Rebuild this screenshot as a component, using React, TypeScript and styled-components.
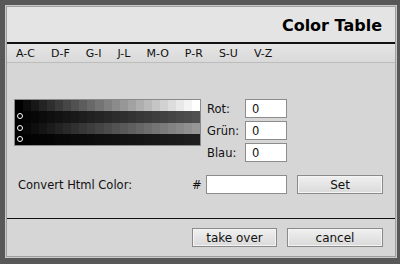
import React from 'react'
import styled, { createGlobalStyle } from 'styled-components'

const GlobalStyle = createGlobalStyle`
    html, body {
        margin : 0;
        padding : 0;
        background : #585858;
    }
    body {
        font-family : "DejaVu Sans", "Liberation Sans", sans-serif;
        color : #111;
    }
`

const Screen = styled.div`
    width : 400px;
    height : 264px;
    padding : 5px 3px 6px 5px;
    box-sizing : border-box;
    background : #585858;
`

const Window = styled.div`
    height : 100%;
    box-sizing : border-box;
    border : 1px solid #c9c9c9;
    box-shadow : inset 0 0 0 1px #9f9f9f;
    padding : 1px;
    display : flex;
    flex-direction : column;
    background : #d6d6d6;
`

const Header = styled.header`
    height : 37px;
    background : #e4e4e4;
    border-bottom : 2px solid #111;
    display : flex;
    align-items : center;
    justify-content : flex-end;
    padding : 2px 13px 0 0;
    box-sizing : border-box;
`

const Title = styled.h1`
    margin : 0;
    font-size : 16px;
    font-weight : bold;
    color : #000;
`

const TabBar = styled.nav`
    height : 18px;
    display : flex;
    align-items : center;
    padding-left : 1px;
    background : linear-gradient(#e6e6e6, #d9d9d9);
    border-bottom : 1px solid #bdbdbd;
`

const Tab = styled.span`
    font-size : 11px;
    padding : 0 8px;
    color : #111;
`

const Body = styled.section`
    flex : 1;
    padding : 36px 0 0 7px;
    border-bottom : 1px solid #111;
`

const TopRow = styled.div`
    display : flex;
    gap : 6px;
`

const Palette = styled.div`
    width : 187px;
    height : 47px;
    box-sizing : border-box;
    border : 1px solid #8a8a8a;
    display : flex;
    flex-direction : column;
`

const Strip = styled.div`
    flex : 1;
    display : flex;
    position : relative;
`

const Cell = styled.div`
    flex : 1;
`

const Thumb = styled.span`
    position : absolute;
    left : 2px;
    top : 50%;
    width : 4px;
    height : 4px;
    margin-top : -3.5px;
    border : 1.5px solid #fff;
    border-radius : 50%;
    background : #000;
`

const Fields = styled.div`
    display : flex;
    flex-direction : column;
    gap : 3px;
`

const FieldRow = styled.label`
    display : flex;
    align-items : center;
    font-size : 11.5px;
`

const FieldLabel = styled.span`
    width : 38px;
`

const Input = styled.div<{ $w: number }>`
    width : ${p => p.$w}px;
    height : 19px;
    box-sizing : border-box;
    background : #fff;
    border : 1px solid #8c8c8c;
    font-size : 11.5px;
    padding-left : 6px;
    display : flex;
    align-items : center;
`

const ConvertRow = styled.div`
    display : flex;
    align-items : center;
    gap : 0;
    margin-top : 13px;
    font-size : 11.5px;
`

const ConvertLabel = styled.span`
    box-sizing : border-box;
    padding-left : 4px;
    width : 178px;
`

const Hash = styled.span`
    width : 14px;
`

const Button = styled.div<{ $w: number }>`
    width : ${p => p.$w}px;
    height : 19px;
    box-sizing : border-box;
    border : 1px solid #8a8a8a;
    box-shadow : inset 0 0 0 1px #f4f4f4;
    background : linear-gradient(#f0f0f0, #dadada);
    display : flex;
    align-items : center;
    justify-content : center;
    font-size : 12px;
    color : #111;
`

const SetButton = styled(Button)`
    margin-left : 10px;
`

const Footer = styled.footer`
    height : 37px;
    display : flex;
    justify-content : flex-end;
    align-items : flex-start;
    gap : 10px;
    padding : 9px 12px 0 0;
    box-sizing : border-box;
`

const tabs = ['A-C', 'D-F', 'G-I', 'J-L', 'M-O', 'P-R', 'S-U', 'V-Z']

// end brightness of each strip, top one runs black -> white
const strips = [
    { max: 255, thumb: false },
    { max: 80, thumb: true },
    { max: 150, thumb: true },
    { max: 30, thumb: true },
]

const STEPS = 23

function App() {
    return (
        <>
            <GlobalStyle />
            <Screen>
                <Window>
                    <Header>
                        <Title>Color Table</Title>
                    </Header>
                    <TabBar>
                        {tabs.map(t => <Tab key={t}>{t}</Tab>)}
                    </TabBar>
                    <Body>
                        <TopRow>
                            <Palette>
                                {strips.map((s, i) => (
                                    <Strip key={i}>
                                        {Array.from({ length: STEPS }).map((_, j) => {
                                            const v = Math.round((s.max * j) / (STEPS - 1))
                                            return <Cell key={j} style={{ background: `rgb(${v},${v},${v})` }} />
                                        })}
                                        {s.thumb && <Thumb />}
                                    </Strip>
                                ))}
                            </Palette>
                            <Fields>
                                <FieldRow><FieldLabel>Rot:</FieldLabel><Input $w={42}>0</Input></FieldRow>
                                <FieldRow><FieldLabel>Grün:</FieldLabel><Input $w={42}>0</Input></FieldRow>
                                <FieldRow><FieldLabel>Blau:</FieldLabel><Input $w={42}>0</Input></FieldRow>
                            </Fields>
                        </TopRow>
                        <ConvertRow>
                            <ConvertLabel>Convert Html Color:</ConvertLabel>
                            <Hash>#</Hash>
                            <Input $w={81} />
                            <SetButton $w={86}>Set</SetButton>
                        </ConvertRow>
                    </Body>
                    <Footer>
                        <Button $w={85}>take over</Button>
                        <Button $w={96}>cancel</Button>
                    </Footer>
                </Window>
            </Screen>
        </>
    )
}

export default App
